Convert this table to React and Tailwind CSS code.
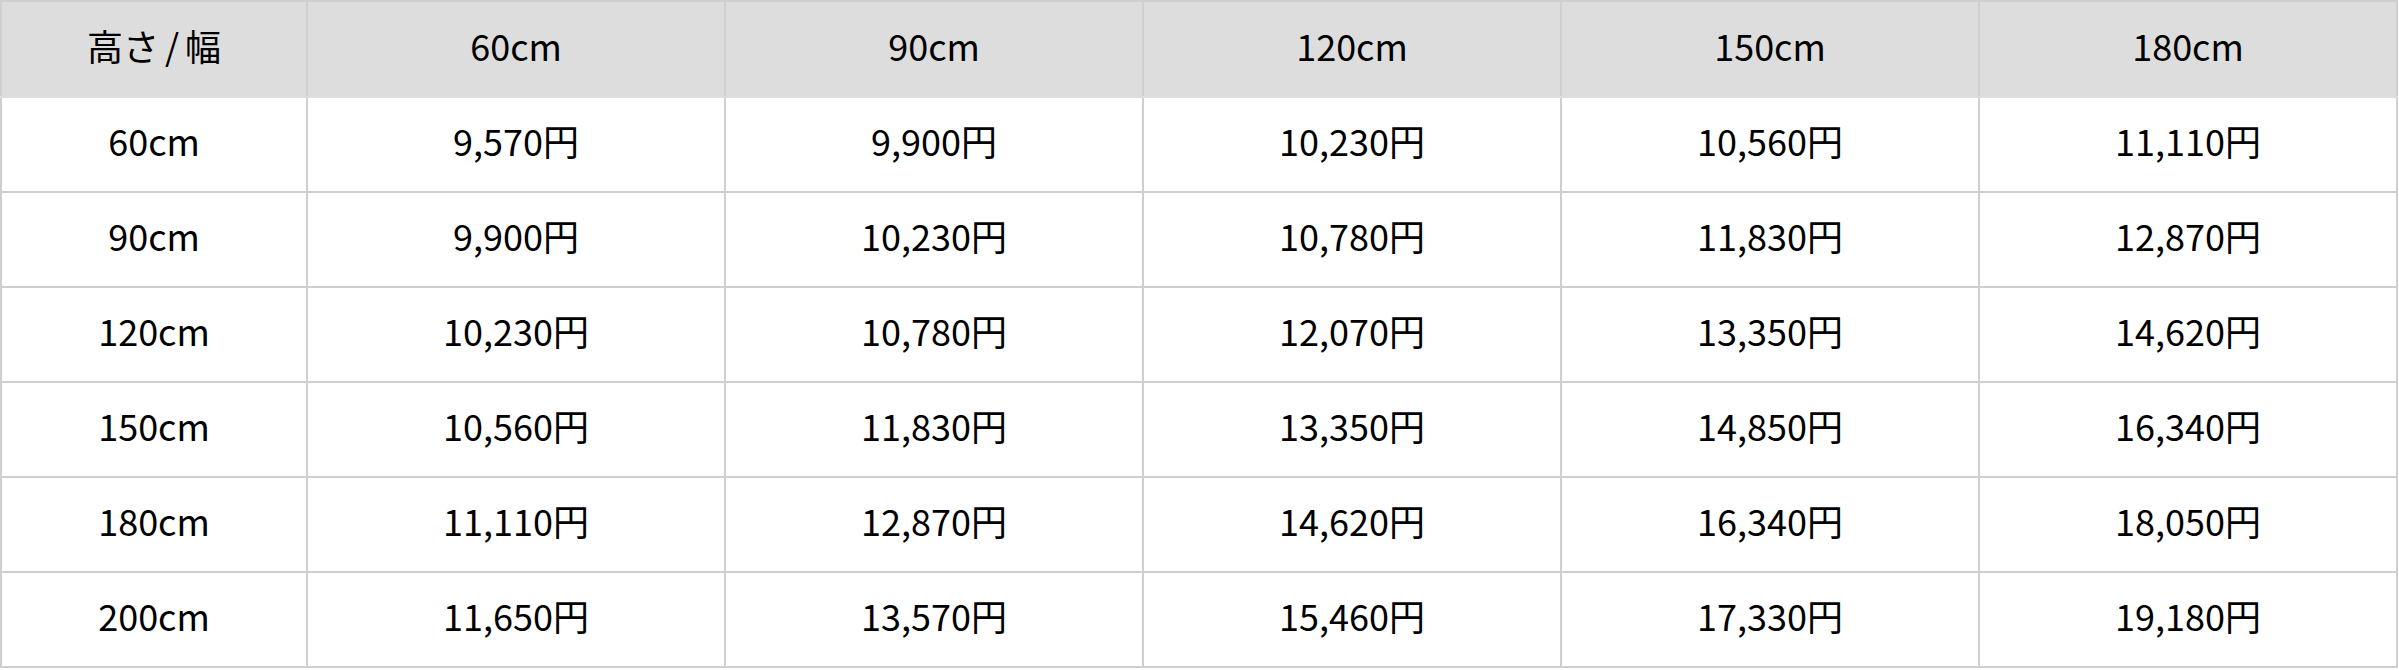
import React from 'react';

const widths = ['60cm', '90cm', '120cm', '150cm', '180cm'];

const rows = [
  { height: '60cm', prices: ['9,570', '9,900', '10,230', '10,560', '11,110'] },
  { height: '90cm', prices: ['9,900', '10,230', '10,780', '11,830', '12,870'] },
  { height: '120cm', prices: ['10,230', '10,780', '12,070', '13,350', '14,620'] },
  { height: '150cm', prices: ['10,560', '11,830', '13,350', '14,850', '16,340'] },
  { height: '180cm', prices: ['11,110', '12,870', '14,620', '16,340', '18,050'] },
  { height: '200cm', prices: ['11,650', '13,570', '15,460', '17,330', '19,180'] },
];

export default function App() {
  return (
    <div className="w-[2399px] bg-white font-['Noto_Sans_CJK_JP','Noto_Sans',sans-serif] text-[36px] leading-none text-black">
      <table className="w-[2398px] h-[668px] table-fixed border-collapse border-2 border-[#cfcfcf]">
        <colgroup>
          <col className="w-[306px]" />
          {widths.map((w) => (
            <col key={w} />
          ))}
        </colgroup>
        <thead>
          {/* 見出し行 */}
          <tr className="h-[96px] bg-[#dddddd]">
            <th className="font-normal text-center pb-[9px] border-2 border-[#cfcfcf] border-b-[#dddddd]">
              高さ<span className="mx-[6px]">/</span>幅
            </th>
            {widths.map((w) => (
              <th key={w} className="font-normal text-center pb-[9px] border-2 border-[#cfcfcf] border-b-[#dddddd]">
                {w}
              </th>
            ))}
          </tr>
        </thead>
        <tbody>
          {rows.map((row) => (
            <tr key={row.height} className="h-[95px]">
              <td className="text-center pb-[9px] border-2 border-[#cfcfcf]">{row.height}</td>
              {row.prices.map((p, i) => (
                <td key={i} className="text-center pb-[9px] border-2 border-[#cfcfcf]">
                  {p}円
                </td>
              ))}
            </tr>
          ))}
        </tbody>
      </table>
    </div>
  );
}
